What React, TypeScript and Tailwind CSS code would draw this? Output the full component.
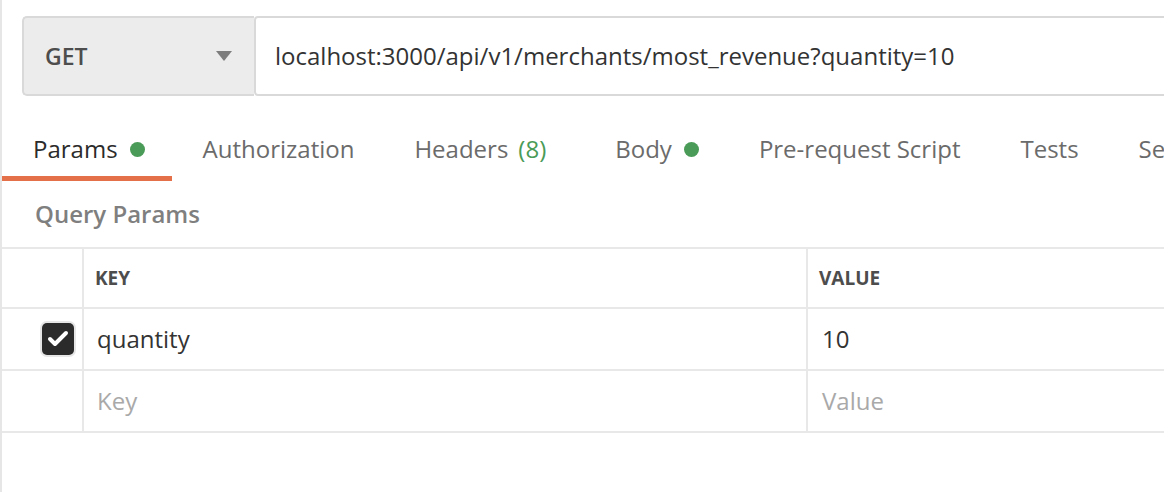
import { Check } from "lucide-react";

const TABS = [
  { id: "params", label: "Params", dot: true, active: true },
  { id: "auth", label: "Authorization" },
  { id: "headers", label: "Headers", count: 8 },
  { id: "body", label: "Body", dot: true },
  { id: "pre", label: "Pre-request Script" },
  { id: "tests", label: "Tests" },
  { id: "settings", label: "Settings" },
];

type Tab = (typeof TABS)[number] & { dot?: boolean; active?: boolean; count?: number };

function TabButton({ tab }: { tab: Tab }) {
  const pad = tab.active ? "pr-[27px]" : tab.count !== undefined ? "pr-[38px]" : "pr-[29px]";
  return (
    <button
      className={`relative flex h-[62px] shrink-0 items-center whitespace-nowrap pb-[2px] pl-[31px] text-[24px] ${
        tab.active ? "text-[#2b2b2b]" : "text-[#6b6b6b]"
      } ${pad}`}
    >
      {tab.label}
      {tab.count !== undefined && <span className="ml-[10px] text-[#4a9b57]">({tab.count})</span>}
      {tab.dot && <span className="ml-[12px] h-[15px] w-[15px] rounded-full bg-[#4a9b57]" />}
      {tab.active && <span className="absolute bottom-0 left-0 right-0 h-[5px] bg-[#e4704a]" />}
    </button>
  );
}

function Row({
  checked,
  keyText,
  value,
  placeholder,
}: {
  checked?: boolean;
  keyText: string;
  value: string;
  placeholder?: boolean;
}) {
  const text = placeholder ? "text-[#a9a9a9]" : "text-[#333]";
  return (
    <div className="flex h-[62px] border-b-2 border-[#e8e8e8]">
      <div className="flex w-[82px] shrink-0 items-center justify-end pr-[8px] border-r-2 border-[#e8e8e8]">
        {checked && (
          <span className="flex h-[32px] w-[32px] items-center justify-center rounded-[5px] bg-[#2b2b2b] ring-2 ring-[#e6e6e6]">
            <Check className="h-[24px] w-[24px] text-white" strokeWidth={4} />
          </span>
        )}
      </div>
      <div className={`flex w-[724px] shrink-0 items-center pl-[13px] border-r-2 border-[#e8e8e8] text-[24px] ${text}`}>
        {keyText}
      </div>
      <div className={`flex flex-1 items-center pl-[14px] text-[24px] ${text}`}>{value}</div>
    </div>
  );
}

export default function App() {
  return (
    <div
      className="h-[492px] w-[1164px] overflow-hidden border-l-2 border-[#e6e6e6] bg-white"
      style={{ fontFamily: '"Open Sans", "Noto Sans", sans-serif' }}
    >
      <div className="flex pl-[20px] pt-[16px]">
        <div className="flex h-[80px] w-[232px] shrink-0 items-center justify-between rounded-l-[5px] border-2 border-r-0 border-[#d9d9d9] bg-[#ececec] pl-[21px] pr-[22px]">
          <span className="text-[23px] font-semibold text-[#4d4d4d]">GET</span>
          <svg width="16" height="10" viewBox="0 0 16 10">
            <path d="M0 0h16L8 10z" fill="#7d7d7d" />
          </svg>
        </div>
        <div className="-mr-[20px] flex h-[80px] flex-1 items-center rounded-l-[4px] border-2 border-[#d9d9d9] bg-white pl-[19px] text-[24px] text-[#333]">
          localhost:3000/api/v1/merchants/most_revenue?quantity=10
        </div>
      </div>

      <div className="mt-[23px] flex overflow-hidden">
        {TABS.map((t) => (
          <TabButton key={t.id} tab={t as Tab} />
        ))}
      </div>

      <div className="flex h-[66px] items-center pl-[33px] text-[24px] font-semibold text-[#7f7f7f]">
        Query Params
      </div>

      <div className="border-t-2 border-[#e8e8e8]">
        <div className="flex h-[60px] border-b-2 border-[#e8e8e8]">
          <div className="w-[82px] shrink-0 border-r-2 border-[#e8e8e8]" />
          <div className="flex w-[724px] shrink-0 items-center border-r-2 border-[#e8e8e8] pl-[11px] text-[19px] font-bold text-[#4d4d4d]">
            KEY
          </div>
          <div className="flex flex-1 items-center pl-[11px] text-[19px] font-bold text-[#4d4d4d]">VALUE</div>
        </div>
        <Row checked keyText="quantity" value="10" />
        <Row keyText="Key" value="Value" placeholder />
      </div>
    </div>
  );
}
